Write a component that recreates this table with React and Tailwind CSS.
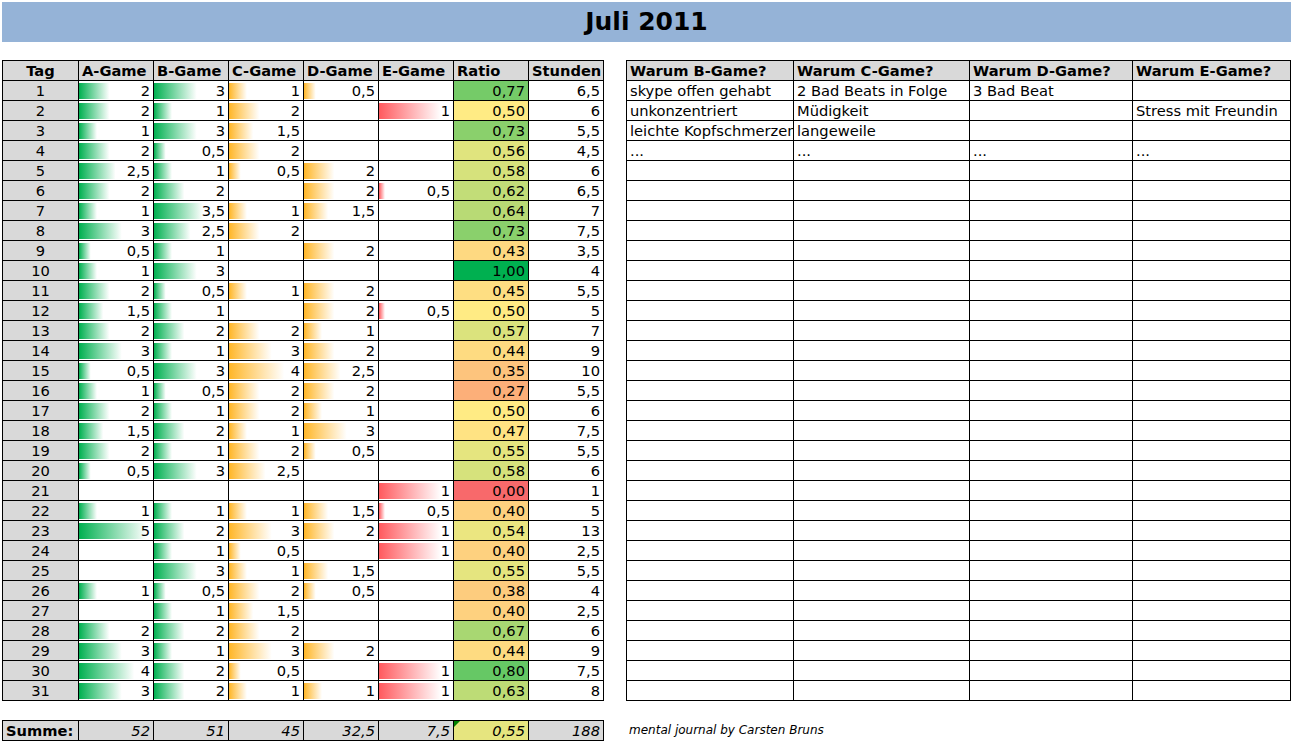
const days = [
  [2, 3, 1, 0.5, null, 0.77, 6.5],
  [2, 1, 2, null, 1, 0.5, 6],
  [1, 3, 1.5, null, null, 0.73, 5.5],
  [2, 0.5, 2, null, null, 0.56, 4.5],
  [2.5, 1, 0.5, 2, null, 0.58, 6],
  [2, 2, null, 2, 0.5, 0.62, 6.5],
  [1, 3.5, 1, 1.5, null, 0.64, 7],
  [3, 2.5, 2, null, null, 0.73, 7.5],
  [0.5, 1, null, 2, null, 0.43, 3.5],
  [1, 3, null, null, null, 1.0, 4],
  [2, 0.5, 1, 2, null, 0.45, 5.5],
  [1.5, 1, null, 2, 0.5, 0.5, 5],
  [2, 2, 2, 1, null, 0.57, 7],
  [3, 1, 3, 2, null, 0.44, 9],
  [0.5, 3, 4, 2.5, null, 0.35, 10],
  [1, 0.5, 2, 2, null, 0.27, 5.5],
  [2, 1, 2, 1, null, 0.5, 6],
  [1.5, 2, 1, 3, null, 0.47, 7.5],
  [2, 1, 2, 0.5, null, 0.55, 5.5],
  [0.5, 3, 2.5, null, null, 0.58, 6],
  [null, null, null, null, 1, 0.0, 1],
  [1, 1, 1, 1.5, 0.5, 0.4, 5],
  [5, 2, 3, 2, 1, 0.54, 13],
  [null, 1, 0.5, null, 1, 0.4, 2.5],
  [null, 3, 1, 1.5, null, 0.55, 5.5],
  [1, 0.5, 2, 0.5, null, 0.38, 4],
  [null, 1, 1.5, null, null, 0.4, 2.5],
  [2, 2, 2, null, null, 0.67, 6],
  [3, 1, 3, 2, null, 0.44, 9],
  [4, 2, 0.5, null, 1, 0.8, 7.5],
  [3, 2, 1, 1, 1, 0.63, 8],
];

const reasons = [
  ["skype offen gehabt", "2 Bad Beats in Folge", "3 Bad Beat", ""],
  ["unkonzentriert", "Müdigkeit", "", "Stress mit Freundin"],
  ["leichte Kopfschmerzen", "langeweile", "", ""],
  ["...", "...", "...", "..."],
];

const leftCols = ["w-[76px]", "w-[75px]", "w-[75px]", "w-[75px]", "w-[75px]", "w-[75px]", "w-[75px]", "w-[75px]"];
const rightCols = ["w-[167px]", "w-[176px]", "w-[163px]", "w-[158px]"];

const fmt = (v) => (v == null ? "" : String(v).replace(".", ","));

function mix(a, b, t) {
  const pa = a.match(/\w\w/g).map((h) => parseInt(h, 16));
  const pb = b.match(/\w\w/g).map((h) => parseInt(h, 16));
  return `rgb(${pa.map((x, i) => Math.round(x + (pb[i] - x) * t)).join(",")})`;
}

// rot -> gelb -> grün, Mitte bei 0,5
function ratioColor(r) {
  if (r <= 0.5) return mix("f8696b", "ffeb84", r / 0.5);
  return mix("ffeb84", "00b050", (r - 0.5) / 0.5);
}

function barStyle(v, col) {
  if (v == null) return undefined;
  const w = col === 4 ? 6 + (v - 0.5) * 112 : 5.6 + 12.4 * v;
  const color = col < 2 ? "#00b050" : col < 4 ? "#ffb628" : "#ff5a5f";
  return {
    backgroundImage: `linear-gradient(to right, ${color}, #ffffff)`,
    backgroundSize: `${w}px 16px`,
    backgroundRepeat: "no-repeat",
    backgroundPosition: "left center",
  };
}

const cell = "h-[20px] shrink-0 border-r border-b border-black px-[3px] leading-[19px] whitespace-nowrap overflow-hidden";

function Headers({ labels, widths, center }) {
  return (
    <div className="flex bg-[#d9d9d9] font-bold">
      {labels.map((l, i) => (
        <div key={l} className={`${cell} ${widths[i]} ${center === i ? "text-center" : "text-left"}`}>
          {l}
        </div>
      ))}
    </div>
  );
}

export default function App() {
  const sums = ["52", "51", "45", "32,5", "7,5", "0,55", "188"];

  return (
    <div className="min-h-screen bg-white p-[2px] font-['DejaVu_Sans',sans-serif] text-[14.67px] text-black">
      <div className="flex h-[40px] w-[1289px] items-center justify-center bg-[#95b3d7] pb-[1px] text-[25px] font-bold">
        Juli 2011
      </div>

      <div className="mt-[18px] flex items-start gap-[22px]">
        {/* Tagesliste */}
        <div>
          <div className="w-[602px] border-l border-t border-black">
            <Headers
              labels={["Tag", "A-Game", "B-Game", "C-Game", "D-Game", "E-Game", "Ratio", "Stunden"]}
              widths={leftCols}
              center={0}
            />
            {days.map((d, i) => (
              <div key={i} className="flex">
                <div className={`${cell} ${leftCols[0]} bg-[#d9d9d9] text-center`}>{i + 1}</div>
                {d.slice(0, 5).map((v, c) => (
                  <div key={c} className={`${cell} ${leftCols[c + 1]} text-right`} style={barStyle(v, c)}>
                    {fmt(v)}
                  </div>
                ))}
                <div className={`${cell} ${leftCols[6]} text-right`} style={{ backgroundColor: ratioColor(d[5]) }}>
                  {d[5].toFixed(2).replace(".", ",")}
                </div>
                <div className={`${cell} ${leftCols[7]} text-right`}>{fmt(d[6])}</div>
              </div>
            ))}
          </div>

          <div className="mt-[19px] flex w-[602px] border-l border-t border-black bg-[#d9d9d9]">
            <div className={`${cell} ${leftCols[0]} font-bold`}>Summe:</div>
            {sums.map((s, i) => (
              <div
                key={i}
                className={`${cell} ${leftCols[i + 1]} relative text-right italic ${i === 5 ? "bg-[#e6e57f]" : ""}`}
              >
                {i === 5 && (
                  <span className="absolute left-0 top-0 h-0 w-0 border-r-[6px] border-t-[6px] border-r-transparent border-t-[#008000]" />
                )}
                {s}
              </div>
            ))}
          </div>
        </div>

        {/* Gründe */}
        <div>
          <div className="w-[665px] border-l border-t border-black">
            <Headers
              labels={["Warum B-Game?", "Warum C-Game?", "Warum D-Game?", "Warum E-Game?"]}
              widths={rightCols}
            />
            {days.map((_, i) => (
              <div key={i} className="flex">
                {rightCols.map((w, c) => (
                  <div key={c} className={`${cell} ${w}`}>
                    {reasons[i]?.[c] ?? ""}
                  </div>
                ))}
              </div>
            ))}
          </div>
          <p className="mt-[22px] pl-[3px] text-[12px] italic leading-[15px]">mental journal by Carsten Bruns</p>
        </div>
      </div>
    </div>
  );
}
